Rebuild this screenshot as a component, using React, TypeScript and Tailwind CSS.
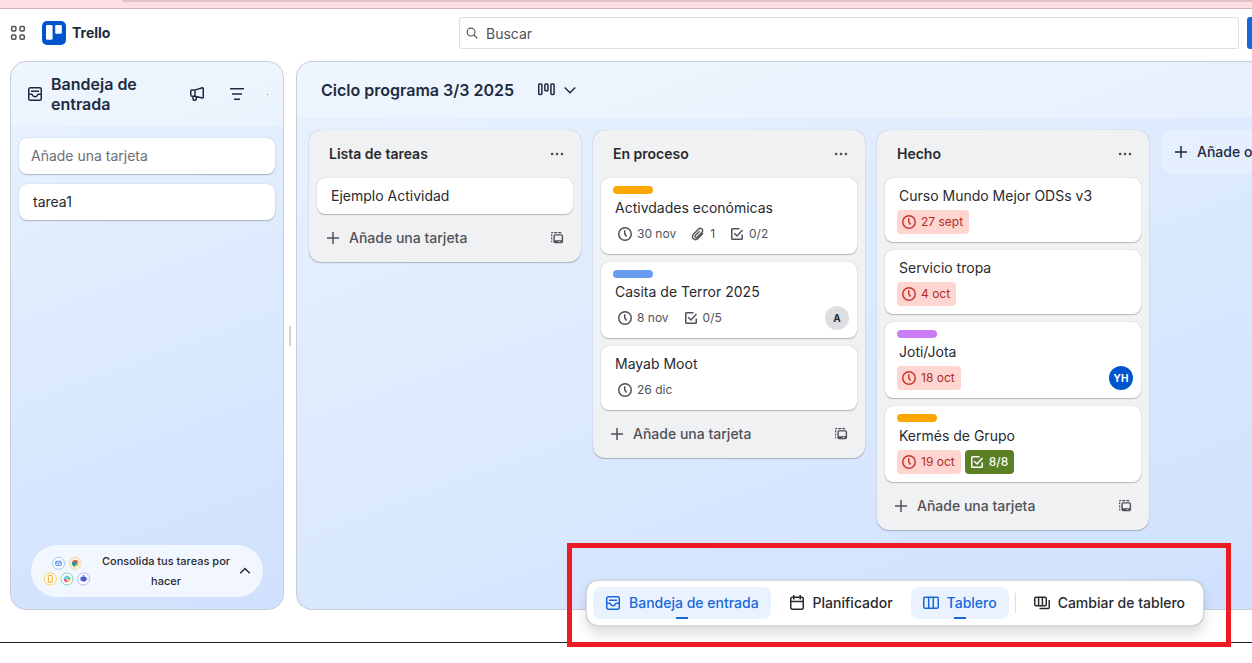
import React from "react";

type IconProps = { className?: string };

const Svg = ({ className = "size-4", children }: IconProps & { children: React.ReactNode }) => (
  <svg viewBox="0 0 16 16" fill="none" stroke="currentColor" strokeWidth="1.5" className={`shrink-0 ${className}`} aria-hidden="true">
    {children}
  </svg>
);

const AppsIcon = () => (
  <Svg>
    <rect x="1.6" y="1.6" width="4.300" height="4.300" rx="1.200" />
    <rect x="10" y="1.6" width="4.300" height="4.300" rx="1.200" />
    <rect x="1.6" y="10" width="4.300" height="4.300" rx="1.200" />
    <rect x="10" y="10" width="4.300" height="4.300" rx="1.200" />
  </Svg>
);

const InboxIcon = () => (
  <Svg>
    <rect x="1.75" y="1.75" width="12.5" height="12.5" rx="1.5" />
    <path d="M4 5.25h8M2 8.25h2.5c.5 0 .8.3 1 .7.400 1 1.300 1.700 2.500 1.700s2.100-.7 2.500-1.700c.2-.4.5-.7 1-.7H14" />
  </Svg>
);

const MegaphoneIcon = () => (
  <Svg>
    <path d="M5.750 4.100 13.300 1.800c.5-.15.95.2.95.7v8.800c0 .5-.45.85-.95.7L5.750 10.250H3a1.250 1.250 0 0 1-1.250-1.250V5.350A1.250 1.250 0 0 1 3 4.100ZM6 4.100v6.150M4 10.250v2.850c0 .7.450 1.150 1.100 1.150h1c.7 0 1.150-.45 1.150-1.150v-2.400" />
  </Svg>
);

const FilterIcon = () => (
  <Svg>
    <path d="M1 2.750h14M3 8h10M5 13.250h6" />
  </Svg>
);

const SearchIcon = () => (
  <Svg className="size-3">
    <circle cx="6.750" cy="6.750" r="5.250" />
    <path d="m10.500 10.500 4.500 4.500" />
  </Svg>
);

const BoardViewIcon = () => (
  <Svg className="size-[18px]">
    <g strokeWidth="1.350">
      <rect x="0.650" y="2.700" width="2.800" height="9.300" rx="0.800" />
      <rect x="6.100" y="2.700" width="2.800" height="6" rx="0.800" />
      <rect x="11.500" y="2.700" width="2.800" height="9.300" rx="0.800" />
    </g>
  </Svg>
);

const ChevronDown = () => (
  <Svg>
    <path d="m2.750 5.500 5.250 5.250 5.250-5.250" />
  </Svg>
);

const ChevronUp = () => (
  <Svg>
    <path d="m3.250 10.250 4.750-4.750 4.750 4.750" />
  </Svg>
);

const DotsIcon = () => (
  <Svg>
    <g fill="currentColor" stroke="none">
      <rect x="1.900" y="6.800" width="2.500" height="2.400" rx="0.900" />
      <rect x="6.800" y="6.800" width="2.500" height="2.400" rx="0.900" />
      <rect x="11.700" y="6.800" width="2.500" height="2.400" rx="0.900" />
    </g>
  </Svg>
);

const PlusIcon = () => (
  <Svg>
    <path d="M8 2v12M2 8h12" />
  </Svg>
);

const TemplateIcon = () => (
  <Svg>
    <rect x="5.100" y="4.900" width="8.300" height="7.700" rx="1" strokeWidth="1.400" />
    <path d="M5 11.200h4.500M11.500 11.200h2" strokeWidth="1.800" />
    <path d="M9 10.700h3" strokeWidth="1" />
    <path d="M2.650 12.300v-1.500M2.650 9.600V7.500M2.650 6.300V4.300M2.200 2.600h2M5.200 2.600h3M9.200 2.600h3" strokeWidth="1.200" />
  </Svg>
);

const ClockIcon = () => (
  <Svg>
    <circle cx="8" cy="8" r="6.250" />
    <path d="M7.750 4.250V8l1.800 2.500" />
  </Svg>
);

const ClipIcon = () => (
  <Svg>
    <path
      d="m13.100 7.300-5.300 5.500a3.050 3.050 0 0 1-4.400 0 3.150 3.150 0 0 1 0-4.500l5.300-5.400a2.300 2.300 0 0 1 3.300 0 2.400 2.400 0 0 1 0 3.400l-4.900 5a1.250 1.250 0 0 1-1.800 0 1.300 1.300 0 0 1 0-1.850l4.200-4.300"
      strokeWidth="1.400"
    />
  </Svg>
);

const CheckIcon = () => (
  <Svg>
    <path d="M10.500 2.750h-7a.75.75 0 0 0-.75.75v9c0 .4.350.75.75.75h9c.4 0 .75-.35.75-.75V8.500" />
    <path d="m5.250 7.250 2.750 2.750 5.500-6" />
  </Svg>
);

const CalendarIcon = () => (
  <Svg>
    <rect x="1.750" y="2.250" width="12.500" height="12" rx="1.500" />
    <path d="M4.750 0v4.500M11.250 0v4.500M2 6.500h12" />
  </Svg>
);

const BoardIcon = () => (
  <Svg>
    <rect x="0.750" y="2.250" width="14.500" height="11" rx="1.200" />
    <path d="M5.700 2.250v11M10.300 2.250v11" />
  </Svg>
);

const SwitchBoardsIcon = () => (
  <Svg>
    <rect x="0.750" y="2.250" width="11.500" height="8.500" rx="1.200" />
    <path d="M4.600 2.250v8.500M8.400 2.250v8.500M15.250 5v7.300c0 .8-.4 1.200-1.200 1.200H5.500" />
  </Svg>
);

const SourcesArt = () => (
  <svg viewBox="0 0 48 32" className="h-8 w-12 shrink-0" aria-hidden="true">
    <g fill="#fff" strokeWidth="0.800">
      <circle cx="15.500" cy="8.300" r="6" stroke="#8fb8f6" />
      <circle cx="32.300" cy="8.300" r="6" stroke="#f3d48a" fill="#f6efe6" />
      <circle cx="7.300" cy="24" r="6" stroke="#fbc828" />
      <circle cx="24" cy="24" r="6" stroke="#6cc3a0" />
      <circle cx="40.500" cy="24" r="6" stroke="#a9a5ee" />
    </g>
    <rect x="12.700" y="6.200" width="5.600" height="4.300" rx="0.600" fill="#cfe1fd" stroke="#4688ec" strokeWidth="0.900" />
    <path d="m13 6.700 2.500 2 2.500-2" fill="none" stroke="#4688ec" strokeWidth="0.800" />
    <path d="M32.300 8.300 29.300 6.600a3.500 3.500 0 0 1 6 0Z" fill="#e2483d" />
    <path d="M32.300 8.300 29.300 6.600a3.500 3.500 0 0 0 3 5.200Z" fill="#22a05b" />
    <path d="M32.300 8.300 35.300 6.600a3.500 3.500 0 0 1-3 5.200Z" fill="#fbc828" />
    <circle cx="32.300" cy="8.300" r="1.600" fill="#357de8" />
    <rect x="5.300" y="20.500" width="4" height="7" rx="0.800" fill="#fff" stroke="#f5a623" strokeWidth="1" />
    <path d="M6.500 26.200h1.600" stroke="#f5a623" strokeWidth="0.800" />
    <g strokeWidth="1.600" strokeLinecap="round">
      <path d="M23 21.400v1.800M21.400 23h.3" stroke="#36c5f0" />
      <path d="M25 23.300h1.800M25 21.400v.3" stroke="#2eb67d" />
      <path d="M25 25v1.600M26.500 25h.2" stroke="#ecb22e" />
      <path d="M21.400 25H23M23 26.500v.2" stroke="#e01e5a" />
    </g>
    <path d="M37.500 22h5.800v2.700a2.300 2.300 0 0 1-4.200 1h-1.600Z" fill="#5059c9" />
    <circle cx="40.500" cy="21.200" r="1.200" fill="#7b83eb" />
    <path d="M43.300 23h1v1.500a1 1 0 0 1-1 1Z" fill="#7b83eb" />
  </svg>
);

type Badge = { kind: "due" | "late" | "clip" | "check" | "done"; text: string };
type Card = { title: string; label?: string; badges?: Badge[]; member?: { initials: string; style: string } };

const lists: { title: string; cards: Card[] }[] = [
  { title: "Lista de tareas", cards: [{ title: "Ejemplo Actividad" }] },
  {
    title: "En proceso",
    cards: [
      {
        title: "Activdades económicas",
        label: "bg-[#fca700]",
        badges: [
          { kind: "due", text: "30 nov" },
          { kind: "clip", text: "1" },
          { kind: "check", text: "0/2" },
        ],
      },
      {
        title: "Casita de Terror 2025",
        label: "bg-[#669df1]",
        badges: [
          { kind: "due", text: "8 nov" },
          { kind: "check", text: "0/5" },
        ],
        member: { initials: "A", style: "bg-[#dddee1] text-[#292a2e]" },
      },
      { title: "Mayab Moot", badges: [{ kind: "due", text: "26 dic" }] },
    ],
  },
  {
    title: "Hecho",
    cards: [
      { title: "Curso Mundo Mejor ODSs v3", badges: [{ kind: "late", text: "27 sept" }] },
      { title: "Servicio tropa", badges: [{ kind: "late", text: "4 oct" }] },
      {
        title: "Joti/Jota",
        label: "bg-[#c97cf4]",
        badges: [{ kind: "late", text: "18 oct" }],
        member: { initials: "YH", style: "bg-[#0055cc] text-white" },
      },
      {
        title: "Kermés de Grupo",
        label: "bg-[#fca700]",
        badges: [
          { kind: "late", text: "19 oct" },
          { kind: "done", text: "8/8" },
        ],
      },
    ],
  },
];

const badgeStyle = {
  due: "text-[#505258]",
  late: "bg-[#ffd5d2] text-[#ae2e24]",
  clip: "text-[#505258]",
  check: "text-[#505258]",
  done: "bg-[#5b7f24] font-medium text-white",
};

const cardShadow = "rounded-lg bg-white shadow-[0_1px_1px_#1e1f2140,0_0_1px_#1e1f214f]";

function BadgeView({ kind, text }: Badge) {
  return (
    <span className={`flex h-6 items-center gap-1 rounded pr-1.5 pl-1 text-xs ${badgeStyle[kind]}`}>
      <span className={kind === "late" ? "text-[#c9372c]" : ""}>
        {kind === "due" || kind === "late" ? <ClockIcon /> : kind === "clip" ? <ClipIcon /> : <CheckIcon />}
      </span>
      {text}
    </span>
  );
}

function CardView({ card }: { card: Card }) {
  return (
    <li className={`flex flex-col gap-1 px-3 py-2 ${cardShadow}`}>
      {card.label && <span className={`h-2 w-10 rounded-full ${card.label}`} />}
      <a href="#" className="px-0.5 text-sm leading-5 text-[#292a2e]">
        {card.title}
      </a>
      {card.badges && (
        <div className="-mr-1 flex items-center justify-between">
          <div className="flex gap-1">
            {card.badges.map((b) => (
              <BadgeView key={b.text} {...b} />
            ))}
          </div>
          {card.member && (
            <span className={`flex size-6 items-center justify-center rounded-full text-[10px] font-bold ${card.member.style}`}>
              {card.member.initials}
            </span>
          )}
        </div>
      )}
    </li>
  );
}

function ListView({ title, cards }: { title: string; cards: Card[] }) {
  return (
    <section className="w-[272px] shrink-0 rounded-xl bg-[#f0f1f2] shadow-[0_1px_1px_#1e1f2140,0_0_1px_#1e1f214f]">
      <header className="flex h-12 items-center justify-between pr-4 pl-5">
        <h2 className="text-sm font-semibold text-[#292a2e]">{title}</h2>
        <button aria-label={`Acciones de ${title}`} className="text-[#505258]">
          <DotsIcon />
        </button>
      </header>
      <ul className="flex flex-col gap-2 px-2">
        {cards.map((c) => (
          <CardView key={c.title} card={c} />
        ))}
      </ul>
      <footer className="flex h-12 items-center justify-between px-4 text-sm font-medium text-[#505258]">
        <button className="flex items-center gap-2">
          <PlusIcon />
          Añade una tarjeta
        </button>
        <button aria-label="Crear desde plantilla">
          <TemplateIcon />
        </button>
      </footer>
    </section>
  );
}

function DockItem({ icon, text, active }: { icon: React.ReactNode; text: string; active?: boolean }) {
  return (
    <button
      aria-pressed={!!active}
      className={`relative flex h-8 items-center gap-2 rounded-lg px-3 whitespace-nowrap ${active ? "bg-[#e9f2fe] text-[#1868db]" : "text-[#292a2e]"}`}
    >
      {icon}
      {text}
      {active && <span className="absolute bottom-0 left-1/2 h-0.5 w-3 -translate-x-1/2 bg-[#1868db]" />}
    </button>
  );
}

export default function App() {
  return (
    <div className="relative flex min-h-screen flex-col overflow-hidden bg-white font-['Inter','Liberation_Sans',sans-serif] text-sm text-[#292a2e]">
      <div className="flex h-[9px] items-start border-b border-[#cdb5bc] bg-[#ffdde4] pl-[122px]">
        <div className="h-0.5 flex-1 rounded-bl-sm bg-[#e0c3c9]" />
      </div>

      <header className="flex h-[52px] shrink-0 items-center gap-2 pb-1">
        <div className="flex w-[451px] items-center gap-4 pl-2.5">
          <button aria-label="Aplicaciones" className="text-[#505258]">
            <AppsIcon />
          </button>
          <a href="#" className="flex items-center gap-1.5 font-bold text-[#1c2b42]">
            <svg viewBox="0 0 24 24" className="size-6" aria-hidden="true">
              <rect width="24" height="24" rx="5" fill="#0055cc" />
              <rect x="4" y="4" width="6.600" height="14.800" rx="1.300" fill="#fff" />
              <rect x="13.200" y="4" width="6.600" height="8.800" rx="1.300" fill="#fff" />
            </svg>
            Trello
          </a>
        </div>
        <label className="flex h-8 flex-1 items-center gap-2 rounded-[3px] border border-[#dddee1] px-1.5 text-[#505258]">
          <SearchIcon />
          <input
            type="search"
            aria-label="Buscar"
            placeholder="Buscar"
            className="min-w-0 flex-1 bg-transparent pt-0.5 text-sm outline-none placeholder:text-[#505258]"
          />
        </label>
        <button aria-label="Crear" className="-mr-[75px] h-8 w-20 shrink-0 rounded-[3px] bg-[#1868db]" />
      </header>

      <main className="flex flex-1 pl-2.5">
        <aside className="flex w-[274px] shrink-0 flex-col overflow-hidden rounded-2xl border border-[#c9ced6] bg-linear-[160deg] from-[#e9f2fe] to-[#cfe1fd]">
          <header className="flex h-16 items-center bg-white/30 pl-4 text-[#1c2b42]">
            <InboxIcon />
            <h1 className="ml-2 flex-1 text-base leading-5 font-semibold">
              Bandeja de entrada
            </h1>
            <div className="flex items-center gap-6 pr-[22px] pl-6">
              <button aria-label="Novedades">
                <MegaphoneIcon />
              </button>
              <button aria-label="Filtrar">
                <FilterIcon />
              </button>
            </div>
            <span className="mr-[15px] size-px bg-[#1c2b42]/60" />
          </header>
          <div className="flex flex-1 flex-col gap-2.5 px-2 pt-3">
            <input
              aria-label="Añade una tarjeta"
              placeholder="Añade una tarjeta"
              className={`h-9 px-3 pb-0.5 text-sm outline-none placeholder:text-[#6b6e76] ${cardShadow}`}
            />
            <a href="#" className={`flex h-9 items-center px-3.5 text-sm ${cardShadow}`}>
              tarea1
            </a>
          </div>
          <button className="mx-5 mb-3 flex h-[52px] items-center rounded-full bg-white/70 pr-2.5 pl-3 text-[11px] leading-5 font-medium">
            <SourcesArt />
            <span className="flex-1 pr-1 pl-2 text-center">Consolida tus tareas por hacer</span>
            <ChevronUp />
          </button>
        </aside>

        <div className="flex w-3 shrink-0 items-center justify-center">
          <span className="h-5 w-0.5 bg-[#d0d3d9]" />
        </div>

        <div className="flex min-w-0 flex-1 flex-col overflow-hidden rounded-l-2xl border border-r-0 border-[#c9ced6] bg-linear-[160deg] from-[#e9f2fe] to-[#cfe1fd]">
          <header className="flex h-14 items-center bg-white/30 pl-6 text-[#1c2b42]">
            <h1 className="text-base font-semibold">Ciclo programa 3/3 2025</h1>
            <button aria-label="Vistas" className="ml-6 flex items-center gap-1.5">
              <BoardViewIcon />
              <ChevronDown />
            </button>
          </header>
          <div className="flex items-start gap-3 pt-3 pl-3">
            {lists.map((l) => (
              <ListView key={l.title} {...l} />
            ))}
            <button className="flex h-11 w-[272px] shrink-0 items-center gap-2 rounded-xl bg-white/25 pl-3 font-medium text-[#1c2b42]">
              <PlusIcon />
              Añade otra lista
            </button>
          </div>
        </div>
      </main>

      <div className="h-8 shrink-0" />
      <div className="h-[21px] shrink-0 border-t border-[#1e1f21]" />

      <div className="absolute right-[21px] bottom-4 border-[5px] border-[#ed1c24] pt-8 pr-[22px] pb-4 pl-3.5">
        <nav
          aria-label="Navegación"
          className="flex items-center gap-1.5 rounded-xl border border-[#d5d8dc] bg-white p-1.5 font-medium shadow-[0_8px_12px_#1e1f2126,0_0_1px_#1e1f214f]"
        >
          <DockItem icon={<InboxIcon />} text="Bandeja de entrada" active />
          <DockItem icon={<CalendarIcon />} text="Planificador" />
          <DockItem icon={<BoardIcon />} text="Tablero" active />
          <span className="h-5 w-px bg-[#dddee1]" />
          <DockItem icon={<SwitchBoardsIcon />} text="Cambiar de tablero" />
        </nav>
      </div>
    </div>
  );
}
